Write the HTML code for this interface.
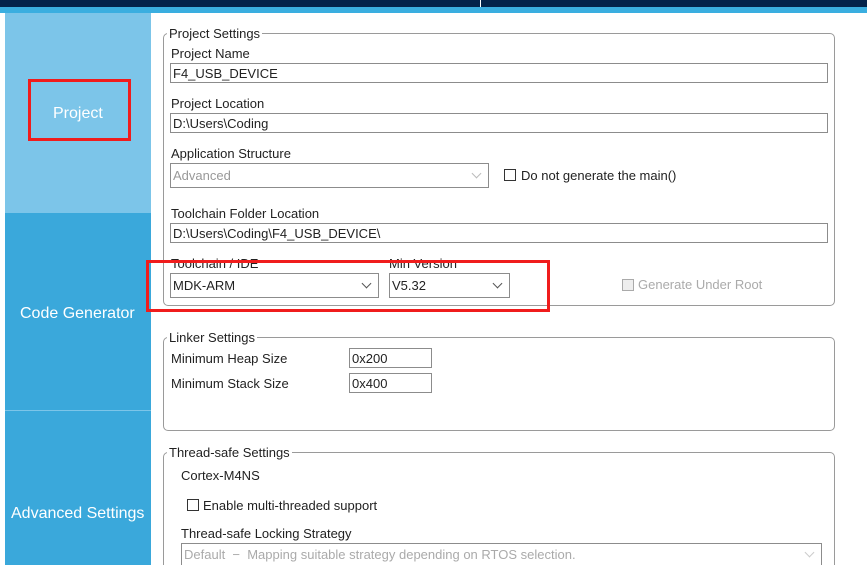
<!DOCTYPE html>
<html style="width:867px;height:565px;overflow:hidden"><head><meta charset="utf-8"><style>
*{margin:0;padding:0;box-sizing:border-box}
body{width:867px;height:565px;overflow:hidden;background:#fff;font-family:"Liberation Sans",sans-serif;font-size:13px;color:#222;position:relative}
.a{position:absolute}
.t{position:absolute;line-height:14px;white-space:nowrap}
.inp{position:absolute;border:1px solid #8c8c8c;background:#fff;padding-left:2px;line-height:19px;white-space:nowrap}
.fs{position:absolute;border:1px solid #9a9a9a;border-radius:5px}
.lg{position:absolute;background:#fff;padding:0 2px;line-height:14px;white-space:nowrap}
.cb{position:absolute;width:12px;height:12px;border:1px solid #333;background:#fff}
.chev{position:absolute;width:7px;height:7px;border-right:1px solid #555;border-bottom:1px solid #555;transform:rotate(45deg)}
.red{position:absolute;border:3px solid #f01c1c}
</style></head><body>
<div class="a" style="left:0;top:0;width:867px;height:7px;background:#03234b"></div>
<div class="a" style="left:480px;top:0;width:1px;height:7px;background:#fff"></div>
<div class="a" style="left:0;top:7px;width:867px;height:6px;background:#3aaee0"></div>
<div class="a" style="left:5px;top:13px;width:146px;height:200px;background:#7cc5e9"></div>
<div class="a" style="left:5px;top:213px;width:146px;height:352px;background:#3aa8db"></div>
<div class="a" style="left:5px;top:410px;width:146px;height:1px;background:#7cc5e9"></div>
<div class="t" style="left:53px;top:105px;color:#fff;font-size:16px;line-height:17px">Project</div>
<div class="t" style="left:20px;top:305px;color:#fff;font-size:16px;line-height:17px">Code Generator</div>
<div class="t" style="left:11px;top:505px;color:#fff;font-size:16px;line-height:17px">Advanced Settings</div>
<div class="red" style="left:28px;top:79px;width:103px;height:62px"></div>

<div class="fs" style="left:163px;top:33px;width:672px;height:273px"></div>
<div class="lg" style="left:167px;top:27px">Project Settings</div>
<div class="t" style="left:171px;top:47px">Project Name</div>
<div class="inp" style="left:170px;top:63px;width:658px;height:20px">F4_USB_DEVICE</div>
<div class="t" style="left:171px;top:97px">Project Location</div>
<div class="inp" style="left:170px;top:113px;width:658px;height:20px">D:\Users\Coding</div>
<div class="t" style="left:171px;top:147px">Application Structure</div>
<div class="inp" style="left:170px;top:163px;width:319px;height:25px;line-height:23px;color:#999">Advanced</div>
<div class="chev" style="left:473px;top:170px;border-color:#bbb"></div>
<div class="cb" style="left:504px;top:169px"></div>
<div class="t" style="left:521px;top:169px">Do not generate the main()</div>
<div class="t" style="left:171px;top:207px">Toolchain Folder Location</div>
<div class="inp" style="left:170px;top:223px;width:658px;height:20px">D:\Users\Coding\F4_USB_DEVICE\</div>
<div class="t" style="left:171px;top:257px">Toolchain / IDE</div>
<div class="inp" style="left:170px;top:273px;width:209px;height:25px;line-height:23px">MDK-ARM</div>
<div class="chev" style="left:363px;top:280px"></div>
<div class="t" style="left:389px;top:257px">Min Version</div>
<div class="inp" style="left:389px;top:273px;width:121px;height:25px;line-height:23px">V5.32</div>
<div class="chev" style="left:494px;top:280px"></div>
<div class="cb" style="left:622px;top:279px;border-color:#aaa;background:#eee"></div>
<div class="t" style="left:638px;top:278px;color:#aaa">Generate Under Root</div>
<div class="red" style="left:146px;top:260px;width:404px;height:52px"></div>

<div class="fs" style="left:163px;top:337px;width:672px;height:94px"></div>
<div class="lg" style="left:167px;top:331px">Linker Settings</div>
<div class="t" style="left:171px;top:352px">Minimum Heap Size</div>
<div class="inp" style="left:349px;top:348px;width:83px;height:20px">0x200</div>
<div class="t" style="left:171px;top:377px">Minimum Stack Size</div>
<div class="inp" style="left:349px;top:373px;width:83px;height:20px">0x400</div>

<div class="fs" style="left:163px;top:452px;width:672px;height:125px"></div>
<div class="lg" style="left:167px;top:446px">Thread-safe Settings</div>
<div class="t" style="left:181px;top:469px">Cortex-M4NS</div>
<div class="cb" style="left:187px;top:499px"></div>
<div class="t" style="left:203px;top:499px">Enable multi-threaded support</div>
<div class="t" style="left:181px;top:527px">Thread-safe Locking Strategy</div>
<div class="inp" style="left:181px;top:543px;width:641px;height:30px;line-height:22px;color:#aaa">Default &nbsp;&minus;&nbsp; Mapping suitable strategy depending on RTOS selection.</div>
<div class="chev" style="left:806px;top:549px;border-color:#ccc"></div>
</body></html>
